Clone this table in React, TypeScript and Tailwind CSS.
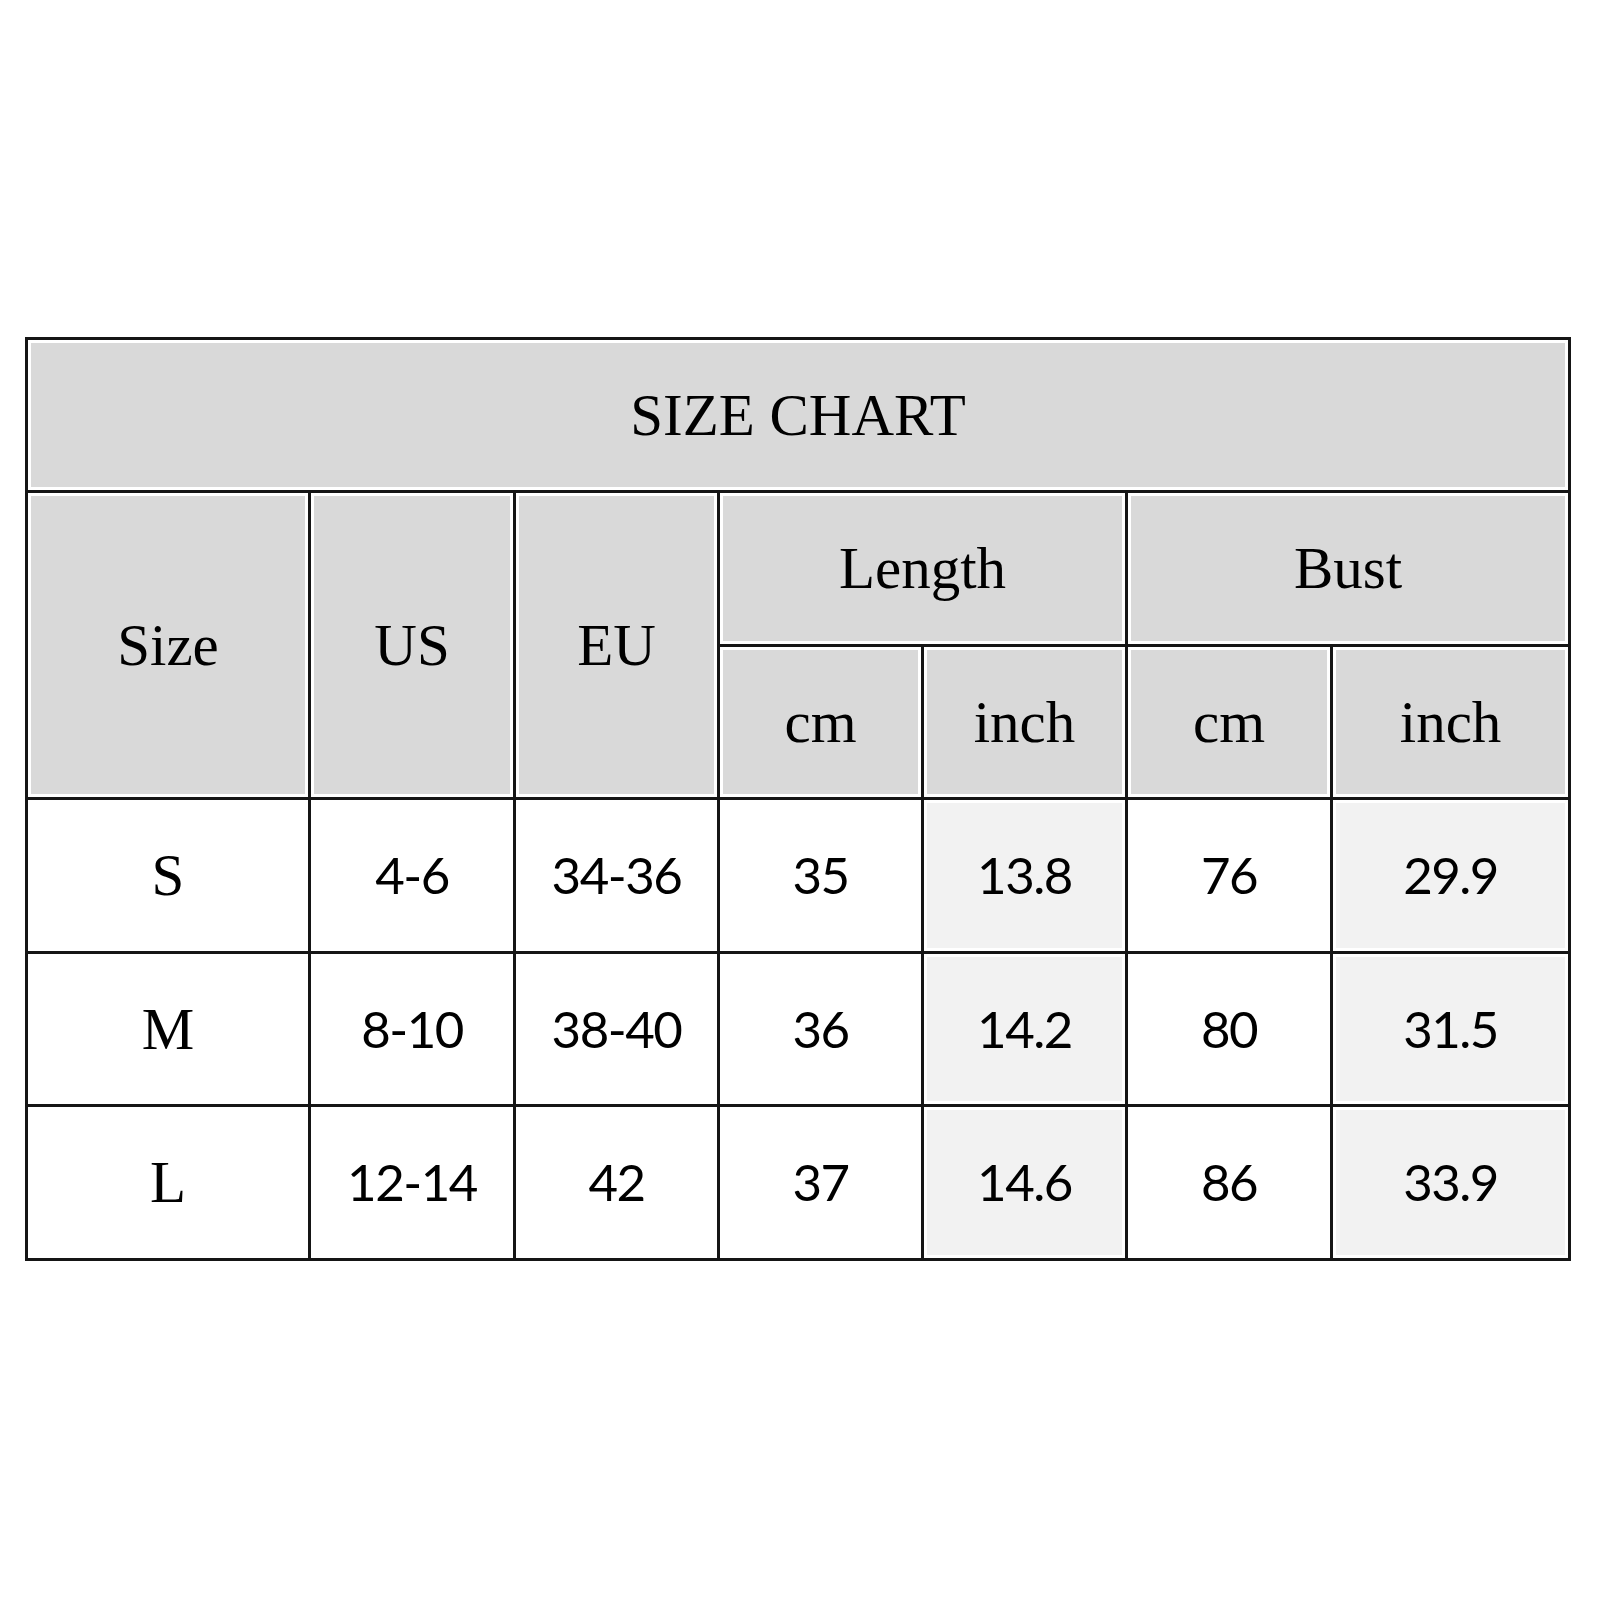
import React from "react";

const serif = "font-['Liberation_Serif',serif]";
const sans = "font-['Lato',sans-serif]";

const rows = [
  { h: "h-[154px]", v: ["S", "4-6", "34-36", "35", "13.8", "76", "29.9"] },
  { h: "h-[153px]", v: ["M", "8-10", "38-40", "36", "14.2", "80", "31.5"] },
  { h: "h-[154px]", v: ["L", "12-14", "42", "37", "14.6", "86", "33.9"] },
];

const cell =
  "border-[3px] border-[#151515] text-center align-middle p-0 shadow-[inset_0_0_0_3px_#ffffff]";
const head = `${cell} bg-[#d9d9d9] ${serif} text-[59px]`;
const num = `${sans} text-[51px] tracking-[-1.5px]`;

export default function App() {
  return (
    <div className="min-h-screen bg-white pt-[337px] pl-[25px]">
      <table className="border-collapse table-fixed w-[1543px] text-black">
        <colgroup>
          <col className="w-[283px]" />
          <col className="w-[205px]" />
          <col className="w-[204px]" />
          <col className="w-[204px]" />
          <col className="w-[204px]" />
          <col className="w-[205px]" />
          <col className="w-[238px]" />
        </colgroup>
        <tbody>
          <tr className="h-[153px]">
            <td colSpan={7} className={head}>
              SIZE CHART
            </td>
          </tr>
          <tr className="h-[154px]">
            <td rowSpan={2} className={head}>
              Size
            </td>
            <td rowSpan={2} className={head}>
              US
            </td>
            <td rowSpan={2} className={head}>
              EU
            </td>
            <td colSpan={2} className={head}>
              Length
            </td>
            <td colSpan={2} className={head}>
              Bust
            </td>
          </tr>
          <tr className="h-[153px]">
            <td className={head}>cm</td>
            <td className={head}>inch</td>
            <td className={head}>cm</td>
            <td className={head}>inch</td>
          </tr>
          {rows.map(({ h, v }) => (
            <tr key={v[0]} className={h}>
              <td className={`${cell} bg-white ${serif} text-[59px]`}>{v[0]}</td>
              <td className={`${cell} bg-white ${num}`}>{v[1]}</td>
              <td className={`${cell} bg-white ${num}`}>{v[2]}</td>
              <td className={`${cell} bg-white ${num}`}>{v[3]}</td>
              <td className={`${cell} bg-[#f2f2f2] ${num}`}>{v[4]}</td>
              <td className={`${cell} bg-white ${num}`}>{v[5]}</td>
              <td className={`${cell} bg-[#f2f2f2] ${num}`}>{v[6]}</td>
            </tr>
          ))}
        </tbody>
      </table>
    </div>
  );
}
